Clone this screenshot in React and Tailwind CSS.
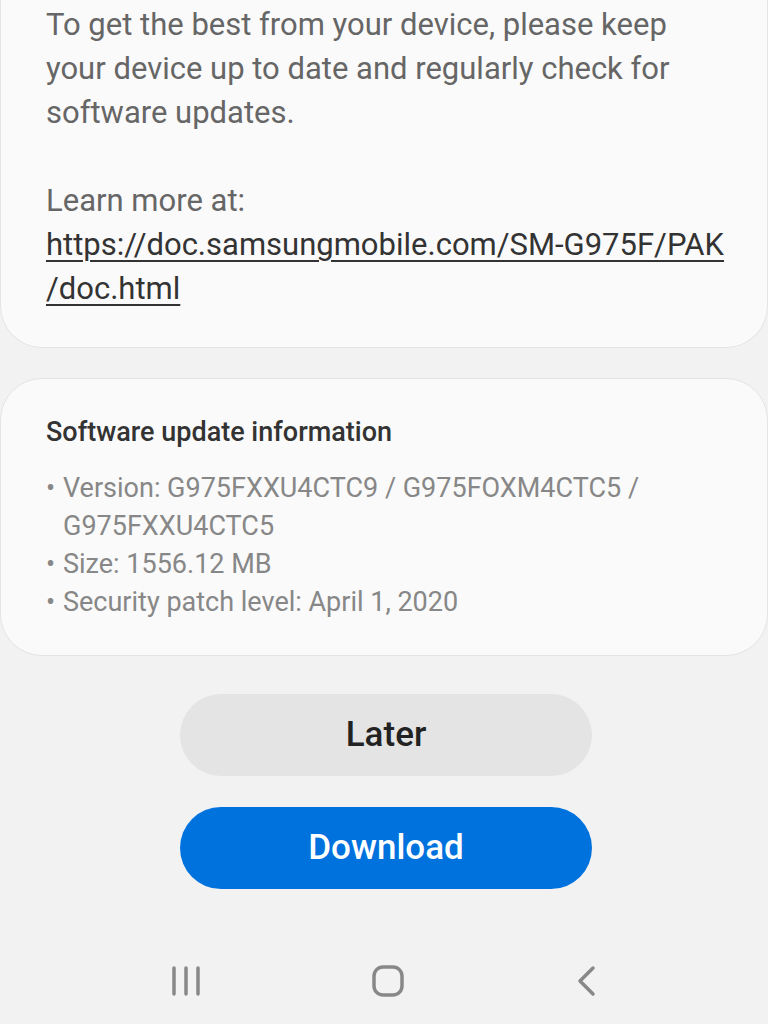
export default function App() {
  return (
    <div className="w-[768px] h-[1024px] bg-[#f2f2f2] overflow-hidden flex flex-col" style={{ fontFamily: 'Roboto, "Noto Sans", sans-serif' }}>
      <div className="bg-[#fafafa] rounded-b-[42px] border border-t-0 border-[#e4e4e4] pt-[3px] pb-[36px] pl-[45px] pr-[10px] text-[31px] leading-[44px] text-[#666666] whitespace-nowrap">
        <p>To get the best from your device, please keep<br />your device up to date and regularly check for<br />software updates.</p>
        <p className="h-[44px]"></p>
        <p>Learn more at:</p>
        <p className="text-[#333333] underline underline-offset-[5px] decoration-[2px]">https://doc.samsungmobile.com/SM-G975F/PAK<br />/doc.html</p>
      </div>
      <div className="mt-[30px] bg-[#fafafa] rounded-[42px] border border-[#e4e4e4] pt-[37px] pb-[34px] pl-[45px] pr-[10px] whitespace-nowrap">
        <h2 className="text-[27px] leading-[32px] font-medium text-[#333333]">Software update information</h2>
        <ul className="mt-[21px] text-[27px] leading-[38px] text-[#878787]">
          <li className="flex"><span className="w-[17px] shrink-0">•</span><span>Version: G975FXXU4CTC9 / G975FOXM4CTC5 /<br />G975FXXU4CTC5</span></li>
          <li className="flex"><span className="w-[17px] shrink-0">•</span><span>Size: 1556.12 MB</span></li>
          <li className="flex"><span className="w-[17px] shrink-0">•</span><span>Security patch level: April 1, 2020</span></li>
        </ul>
      </div>
      <div className="mt-[38px] pl-[4px] flex flex-col items-center gap-[31px]">
        <button className="w-[412px] h-[82px] rounded-full bg-[#e4e4e4] text-[35px] font-medium text-[#222222]">Later</button>
        <button className="w-[412px] h-[82px] rounded-full bg-[#0072de] text-[35px] font-medium text-white">Download</button>
      </div>
      <div className="mt-auto h-[86px] flex items-center justify-between pl-[170px] pr-[170px]">
        <svg width="32" height="34" viewBox="0 0 32 34">
          <g stroke="#888888" strokeWidth="3.5" strokeLinecap="round">
            <line x1="4" y1="4" x2="4" y2="30" />
            <line x1="16" y1="4" x2="16" y2="30" />
            <line x1="28" y1="4" x2="28" y2="30" />
          </g>
        </svg>
        <svg width="34" height="34" viewBox="0 0 34 34">
          <rect x="3" y="3" width="28" height="28" rx="9" fill="none" stroke="#888888" strokeWidth="3.5" />
        </svg>
        <svg width="24" height="34" viewBox="0 0 24 34">
          <polyline points="19,4 6,17 19,30" fill="none" stroke="#888888" strokeWidth="3.5" strokeLinecap="round" strokeLinejoin="round" />
        </svg>
      </div>
    </div>
  );
}
